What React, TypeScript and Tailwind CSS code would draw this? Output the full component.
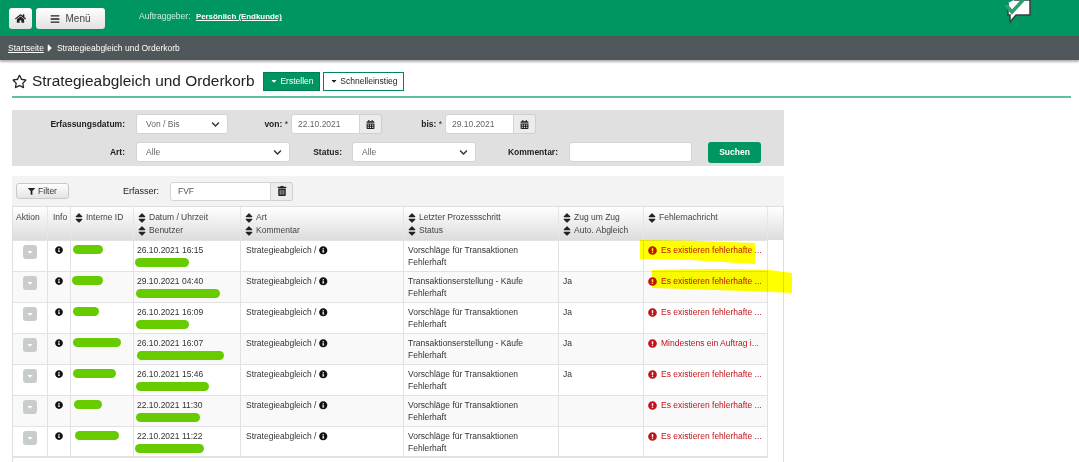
import { FaHome, FaBars, FaCalendarAlt, FaTrashAlt, FaFilter, FaSort, FaInfoCircle, FaExclamationCircle, FaRegStar, FaCaretDown, FaCaretRight, FaChevronDown } from "react-icons/fa";

const rows = [
  { id: 30, idX: 2, date: "26.10.2021 16:15", user: 54, userX: -2, step: "Vorschläge für Transaktionen", zug: "", msg: "Es existieren fehlerhafte ..." },
  { id: 31, idX: 1, date: "29.10.2021 04:40", user: 84, userX: -1, step: "Transaktionserstellung - Käufe", zug: "Ja", msg: "Es existieren fehlerhafte ..." },
  { id: 26, idX: 2, date: "26.10.2021 16:09", user: 53, userX: -1, step: "Vorschläge für Transaktionen", zug: "Ja", msg: "Es existieren fehlerhafte ..." },
  { id: 48, idX: 2, date: "26.10.2021 16:07", user: 87, userX: 0, step: "Transaktionserstellung - Käufe", zug: "Ja", msg: "Mindestens ein Auftrag i..." },
  { id: 43, idX: 2, date: "26.10.2021 15:46", user: 73, userX: -1, step: "Vorschläge für Transaktionen", zug: "Ja", msg: "Es existieren fehlerhafte ..." },
  { id: 28, idX: 3, date: "22.10.2021 11:30", user: 64, userX: -1, step: "Vorschläge für Transaktionen", zug: "", msg: "Es existieren fehlerhafte ..." },
  { id: 44, idX: 4, date: "22.10.2021 11:22", user: 69, userX: -2, step: "Vorschläge für Transaktionen", zug: "", msg: "Es existieren fehlerhafte ..." },
];

function Sort({ children }: { children: React.ReactNode }) {
  return (
    <div className="flex items-center gap-[3px] h-[13px]">
      <FaSort className="text-[12px] -mx-[2px] text-[#222] shrink-0" />
      <span>{children}</span>
    </div>
  );
}

function Select({ value, className }: { value: string; className: string }) {
  return (
    <div className={`h-[20px] bg-white rounded-[3px] border border-[#d4d4d4] flex items-center justify-between pl-[9px] pr-[7px] text-[#666] ${className}`}>
      <span>{value}</span>
      <FaChevronDown className="text-[9px] text-[#333]" />
    </div>
  );
}

function DateInput({ value }: { value: string }) {
  return (
    <div className="flex h-[20px] w-[91px]">
      <div className="flex-1 bg-white rounded-l-[3px] border border-[#d4d4d4] pl-[6px] flex items-center text-[#666]">{value}</div>
      <div className="w-[22px] bg-[#ececec] border border-l-0 border-[#cfcfcf] rounded-r-[3px] flex items-center justify-center">
        <FaCalendarAlt className="text-[9px] text-[#222]" />
      </div>
    </div>
  );
}

export default function App() {
  return (
    <div className="relative w-[1079px] h-[462px] overflow-hidden bg-white font-['Liberation_Sans',Arial,sans-serif] text-[8.5px] leading-none text-[#333]">
      {/* Top bar */}
      <header className="h-[36px] bg-[#009661] flex items-start pl-[9px] relative">
        <button className="mt-[8px] w-[23px] h-[21px] rounded-[3px] bg-gradient-to-b from-white to-[#e2e2e2] flex items-center justify-center">
          <FaHome className="text-[11px] text-[#222]" />
        </button>
        <button className="mt-[8px] ml-[4px] w-[69px] h-[21px] rounded-[3px] bg-gradient-to-b from-white to-[#e2e2e2] flex items-center justify-center gap-[5px] text-[10px] text-[#444]">
          <FaBars className="text-[10px] text-[#222]" />
          Menü
        </button>
        <div className="ml-[34px] mt-[12px] text-[#cfeee0]">
          Auftraggeber: <span className="ml-[3px] underline text-white font-bold text-[7.9px]">Persönlich (Endkunde)</span>
        </div>
        <svg className="absolute left-[1005px] top-0" width="30" height="25" viewBox="0 0 30 25">
          <path d="M3 3 L3 15 L5 15 L5 22 L11 15 L25 15 L25 0 L9 0" fill="#fff" stroke="#3a3f41" strokeWidth="1.5" />
          <path d="M1 5 L7 12 L19 -1" fill="none" stroke="#2e9e6a" strokeWidth="3.5" />
        </svg>
      </header>

      {/* Breadcrumb */}
      <nav className="h-[24px] bg-[#50575a] shadow-[0_2px_2px_rgba(0,0,0,0.3)] flex items-center pl-[8px] text-white">
        <span className="underline">Startseite</span>
        <FaCaretRight className="mx-[0.5px] text-[12px]" />
        <span>Strategieabgleich und Orderkorb</span>
      </nav>

      {/* Title */}
      <div className="ml-[12px] mr-[8px] mt-[9px] h-[29px] pb-[3px] border-b-2 border-[#5fbf9f] flex items-center">
        <FaRegStar className="text-[15px] text-[#222]" />
        <h1 className="ml-[5px] text-[15.4px] font-normal text-[#222]">Strategieabgleich und Orderkorb</h1>
        <button className="ml-[9px] w-[57px] h-[19px] bg-[#009661] border border-[#007f52] flex items-center justify-center gap-[2px] text-white">
          <FaCaretDown className="text-[8px]" />
          Erstellen
        </button>
        <button className="ml-[3px] w-[81px] h-[19px] bg-white border border-[#00865a] flex items-center justify-center gap-[2px] text-[#222]">
          <FaCaretDown className="text-[8px]" />
          Schnelleinstieg
        </button>
      </div>

      {/* Search form */}
      <section className="ml-[12px] mt-[12px] w-[772px] h-[56px] bg-[#e0e0e0] pt-[4px] font-bold">
        <div className="flex items-center h-[20px]">
          <div className="w-[113px] text-right text-[#222]">Erfassungsdatum:</div>
          <Select value="Von / Bis" className="ml-[11px] w-[92px] font-normal" />
          <div className="w-[60px] text-right text-[#222]">von: <span className="font-normal">*</span></div>
          <div className="ml-[3px] font-normal"><DateInput value="22.10.2021" /></div>
          <div className="w-[60px] text-right text-[#222]">bis: <span className="font-normal">*</span></div>
          <div className="ml-[3px] font-normal"><DateInput value="29.10.2021" /></div>
        </div>
        <div className="flex items-center h-[20px] mt-[8px]">
          <div className="w-[113px] text-right text-[#222]">Art:</div>
          <Select value="Alle" className="ml-[11px] w-[154px] font-normal" />
          <div className="w-[52px] text-right text-[#222]">Status:</div>
          <Select value="Alle" className="ml-[10px] w-[124px] font-normal" />
          <div className="w-[82px] text-right text-[#222]">Kommentar:</div>
          <div className="ml-[11px] w-[123px] h-[20px] bg-white rounded-[3px] border border-[#d4d4d4]" />
          <button className="ml-[16px] w-[53px] h-[21px] rounded-[3px] bg-[#009661] text-white">Suchen</button>
        </div>
      </section>

      {/* Result table */}
      <section className="ml-[12px] mt-[10px] w-[772px] border-x border-[#dedede] h-[286px]">
        <div className="h-[30px] bg-[#f3f3f3] flex items-center -mx-px">
          <button className="ml-[4px] w-[53px] h-[16px] rounded-[3px] bg-gradient-to-b from-white to-[#e4e4e4] border border-[#c8c8c8] flex items-center justify-center gap-[3px] text-[#333]">
            <FaFilter className="text-[7px] text-[#222]" />
            Filter
          </button>
          <span className="ml-[54px] w-[37px] text-[9px] text-[#222]">Erfasser:</span>
          <div className="ml-[10px] w-[101px] h-[19px] bg-white border border-[#d4d4d4] rounded-l-[3px] flex items-center pl-[7px] text-[#555]">FVF</div>
          <div className="w-[22px] h-[19px] bg-[#ececec] border border-l-0 border-[#cfcfcf] rounded-r-[3px] flex items-center justify-center">
            <FaTrashAlt className="text-[10px] text-[#222]" />
          </div>
        </div>

        <div className="grid grid-cols-[34px_23px_63px_107px_163px_155px_85px_125px] h-[34px] border-t border-[#dedede] bg-gradient-to-b from-white to-[#dcdcdc] text-[#444]">
          <div className="pl-[3px] pt-[6px]">Aktion</div>
          <div className="border-l border-[#e6e6e6] pl-[5px] pt-[6px]">Info</div>
          <div className="border-l border-[#e6e6e6] pl-[4px] pt-[4px]"><Sort>Interne ID</Sort></div>
          <div className="border-l border-[#e6e6e6] pl-[4px] pt-[4px]"><Sort>Datum / Uhrzeit</Sort><Sort>Benutzer</Sort></div>
          <div className="border-l border-[#e6e6e6] pl-[4px] pt-[4px]"><Sort>Art</Sort><Sort>Kommentar</Sort></div>
          <div className="border-l border-[#e6e6e6] pl-[4px] pt-[4px]"><Sort>Letzter Prozessschritt</Sort><Sort>Status</Sort></div>
          <div className="border-l border-[#e6e6e6] pl-[4px] pt-[4px]"><Sort>Zug um Zug</Sort><Sort>Auto. Abgleich</Sort></div>
          <div className="border-x border-[#e6e6e6] pl-[4px] pt-[4px]"><Sort>Fehlernachricht</Sort></div>
        </div>

        <div className="w-[755px]">
          {rows.map((r, i) => (
            <div
              key={r.date}
              className={`grid grid-cols-[34px_23px_63px_107px_163px_155px_85px_125px] border-t border-[#e2e2e2] ${i === 6 ? "h-[30px]" : "h-[31px]"} ${i % 2 ? "bg-[#f9f9f9]" : "bg-white"}`}
            >
              <div className="flex justify-center pt-[4px]">
                <div className="w-[14px] h-[14px] rounded-[3px] bg-[#c8cccc] flex items-center justify-center">
                  <FaCaretDown className="text-[8px] text-white" />
                </div>
              </div>
              <div className="border-l border-[#e2e2e2] pt-[5px] flex justify-center">
                <FaInfoCircle className="text-[8px] text-[#111]" />
              </div>
              <div className="border-l border-[#e2e2e2] pt-[4px]">
                <div className="h-[9px] rounded-full bg-[#66cc00]" style={{ width: r.id, marginLeft: r.idX }} />
              </div>
              <div className="border-l border-[#e2e2e2] pl-[3px] pt-[5px] text-[#333]">
                <div>{r.date}</div>
                <div className="h-[9px] mt-[3px] rounded-full bg-[#66cc00]" style={{ width: r.user, marginLeft: r.userX }} />
              </div>
              <div className="border-l border-[#e2e2e2] pl-[5px] pt-[5px] flex items-start gap-[3px]">
                Strategieabgleich /
                <FaInfoCircle className="text-[8.5px] text-[#111]" />
              </div>
              <div className="border-l border-[#e2e2e2] pl-[4px] pt-[3px] leading-[12px]">
                <div>{r.step}</div>
                <div>Fehlerhaft</div>
              </div>
              <div className="border-l border-[#e2e2e2] pl-[4px] pt-[5px]">{r.zug}</div>
              <div className="border-x border-[#e2e2e2] pl-[4px] pt-[5px] flex items-start gap-[4px] text-[#c0141c]">
                <FaExclamationCircle className="text-[9px] shrink-0 -mt-[0.5px]" />
                <span className="whitespace-nowrap">{r.msg}</span>
              </div>
            </div>
          ))}
          <div className="border-t-2 border-[#e2e2e2]" />
        </div>
      </section>

      {/* Yellow marker strokes on top of the screenshot */}
      <svg className="absolute left-0 top-0 pointer-events-none mix-blend-multiply" width="1079" height="462">
        <path d="M640 240 Q680 240 700 241 L755 243 L755 264 L690 260 L640 259 Z" fill="#ffff00" />
        <path d="M652 270 Q720 268 770 270 L792 273 L792 293 Q720 290 652 288 Z" fill="#ffff00" />
      </svg>
    </div>
  );
}
